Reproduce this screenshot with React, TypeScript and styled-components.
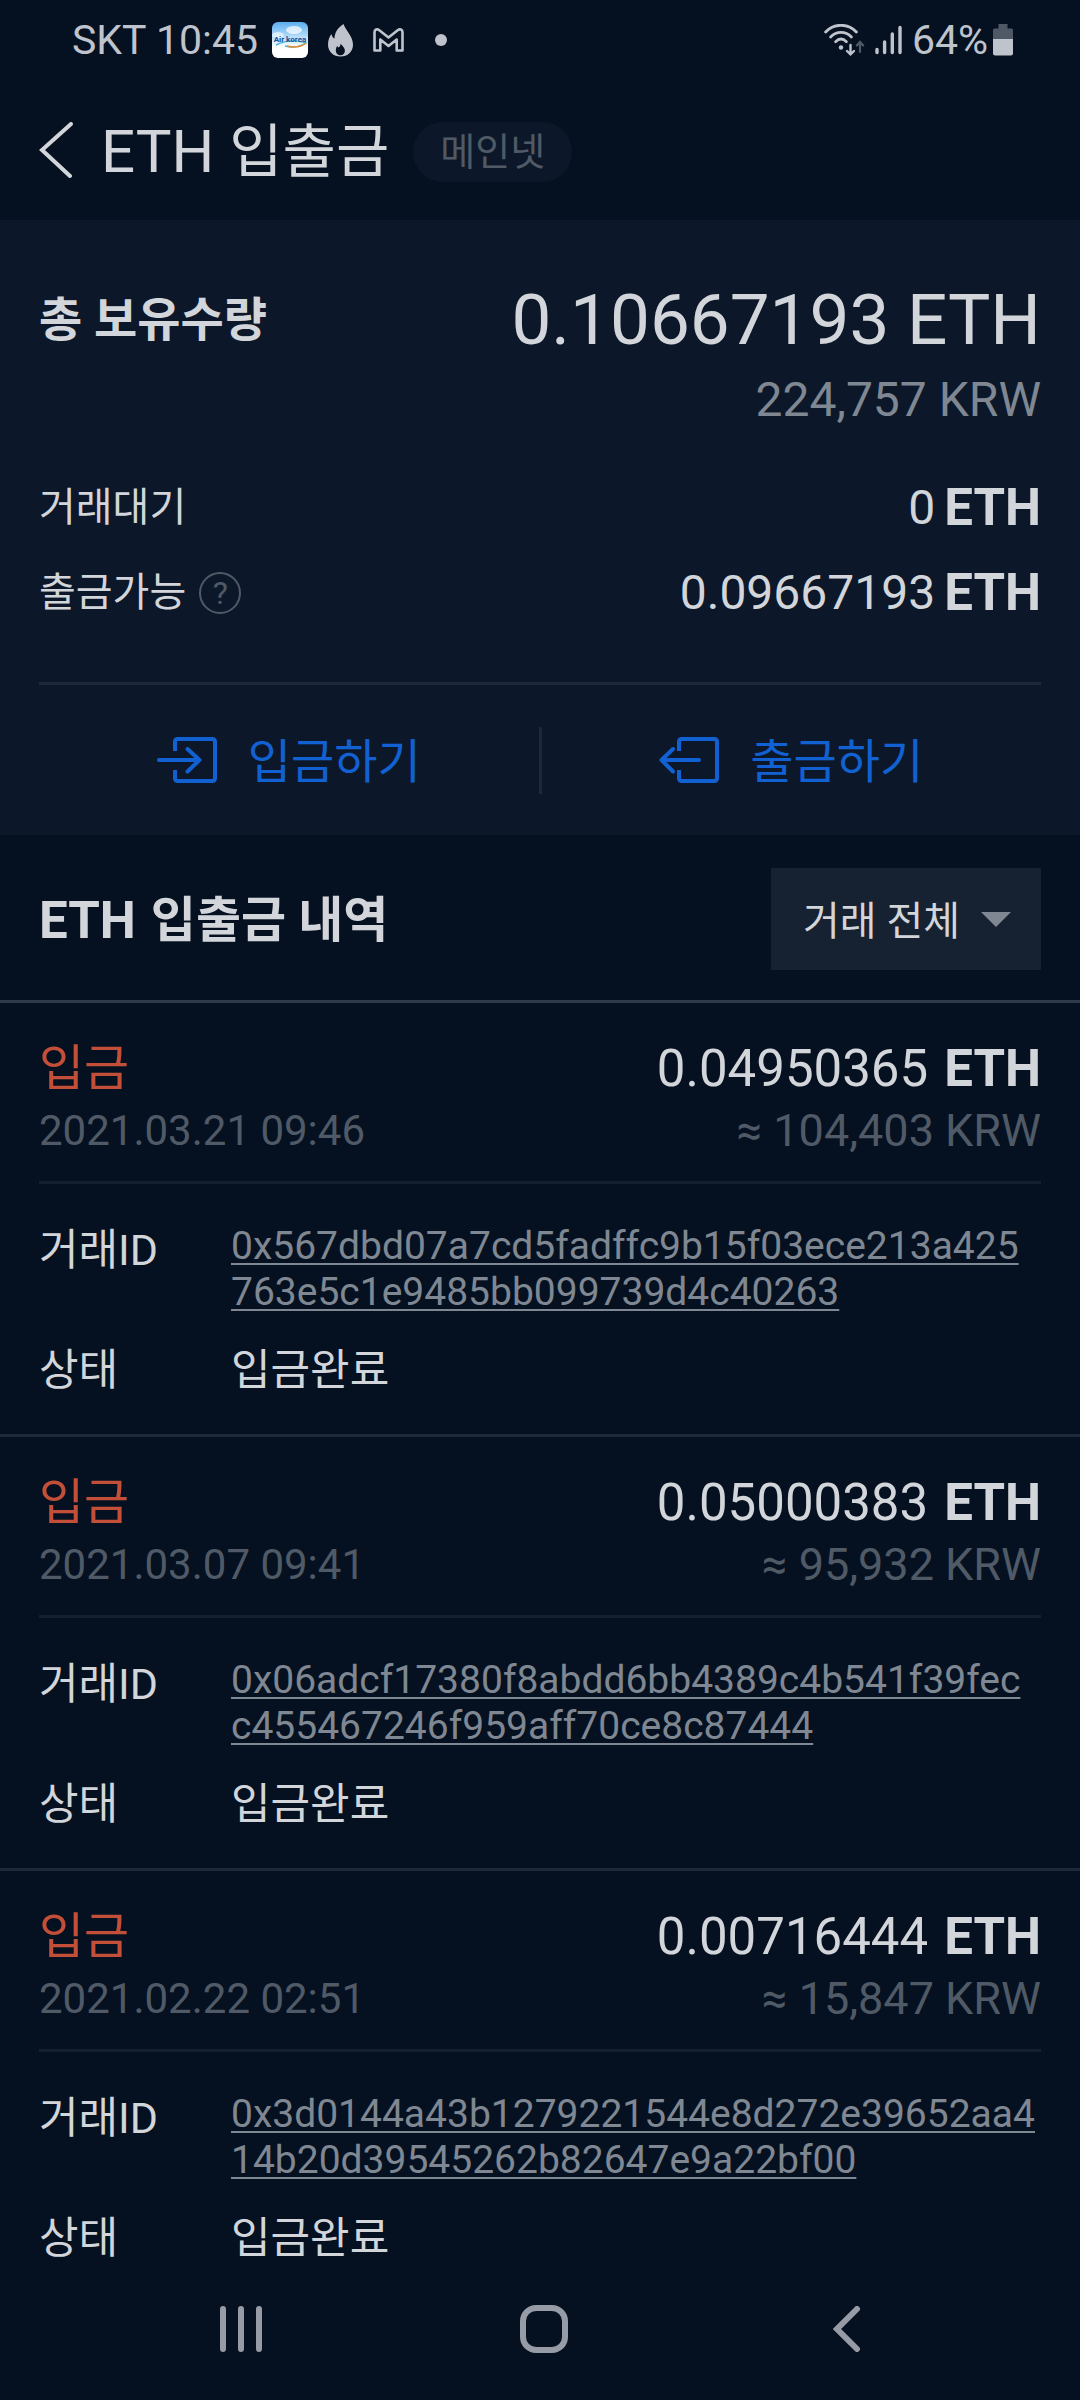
import React from "react";
import styled, { createGlobalStyle } from "styled-components";

const color = {
  page: "#051120",
  panel: "#0c1829",
  field: "#162231",
  text: "#d2d5d9",
  sub: "#7f8792",
  dim: "#505a67",
  status: "#bfc4cc",
  nav: "#969ba5",
  blue: "#1261d2",
  red: "#c44f38",
  lineSoft: "#14202e",
  line: "#1d2938",
  lineStrong: "#2f3b4a",
};

const GlobalStyle = createGlobalStyle`
  *, *::before, *::after { box-sizing: border-box; }
  body {
    margin: 0;
    background: ${color.page};
    color: ${color.text};
    font-family: Roboto, "Noto Sans CJK KR", sans-serif;
  }
  h1, h2, p, dl, dd, dt, ul { margin: 0; padding: 0; font-weight: 400; }
  button { margin: 0; padding: 0; border: 0; background: none; color: inherit; font: inherit; cursor: pointer; }
  svg { display: block; flex: none; }
`;

const Screen = styled.div`
  display: flex;
  flex-direction: column;
  height: 100vh;
`;

const StatusBar = styled.div`
  display: flex;
  flex: none;
  align-items: center;
  justify-content: space-between;
  height: 80px;
  padding: 0 67px 0 72px;
  font-size: 41px;
  line-height: 48px;
  color: ${color.status};
`;

const StatusGroup = styled.div<{ $gap: number }>`
  display: flex;
  align-items: center;
  gap: ${(p) => p.$gap}px;
`;

const Header = styled.header`
  display: flex;
  flex: none;
  align-items: center;
  height: 140px;
  padding: 4px 39px 0;
`;

const BackButton = styled.button`
  padding-right: 28px;
`;

const Title = styled.h1`
  font-size: 60px;
  line-height: 72px;
`;

const TitleKo = styled.span`
  font-size: 58px;
`;

const Badge = styled.span`
  margin-left: 24px;
  padding: 0 27px;
  border-radius: 30px;
  background: ${color.panel};
  color: ${color.dim};
  font-size: 38px;
  line-height: 60px;
`;

const Panel = styled.section`
  flex: none;
  padding: 58px 39px 0;
  background: ${color.panel};
`;

const Row = styled.div`
  display: flex;
  align-items: flex-start;
  justify-content: space-between;
`;

const TotalLabel = styled.h2`
  font-size: 47px;
  font-weight: 700;
  line-height: 84px;
`;

const TotalValue = styled.div`
  display: grid;
  gap: 10px;
  text-align: right;
`;

const TotalAmount = styled.p`
  font-size: 71px;
  line-height: 84px;
`;

const TotalFiat = styled.p`
  color: ${color.sub};
  font-size: 48px;
  line-height: 56px;
`;

const Balances = styled.div`
  display: grid;
  gap: 25px;
  padding: 50px 0 59px;
`;

const BalanceLabel = styled.div`
  display: flex;
  align-items: center;
  gap: 13px;
  font-size: 40px;
  line-height: 60px;
`;

const HelpButton = styled.button`
  width: 42px;
  height: 42px;
  border: 2px solid ${color.dim};
  border-radius: 50%;
  color: ${color.dim};
  font-size: 32px;
  line-height: 38px;
`;

const BalanceValue = styled.p`
  display: flex;
  gap: 9px;
  font-size: 48px;
  line-height: 60px;
`;

const Unit = styled.strong`
  font-size: 51px;
  font-weight: 700;
`;

const Actions = styled.div`
  display: flex;
  align-items: center;
  height: 153px;
  border-top: 3px solid ${color.line};
`;

const ActionButton = styled.button`
  display: flex;
  flex: 1;
  align-items: center;
  justify-content: center;
  gap: 31px;
  color: ${color.blue};
  font-size: 47px;
  line-height: 68px;
`;

const ActionLabel = styled.span`
  padding-top: 3px;
`;

const ActionDivider = styled.span`
  width: 3px;
  height: 67px;
  background: ${color.line};
`;

const HistoryHead = styled.div`
  display: flex;
  flex: none;
  align-items: center;
  justify-content: space-between;
  padding: 33px 39px 30px;
  border-bottom: 3px solid ${color.lineStrong};
`;

const HistoryTitle = styled.h2`
  display: flex;
  gap: 15px;
  padding-top: 4px;
  font-size: 49px;
  font-weight: 700;
  line-height: 60px;
`;

const FilterBox = styled.label`
  display: grid;
  align-items: center;
  background: ${color.field};
  & > * { grid-area: 1 / 1; }
  & > svg { justify-self: end; margin-right: 30px; pointer-events: none; }
`;

const FilterSelect = styled.select`
  width: 270px;
  height: 102px;
  padding: 4px 32px 0;
  border: 0;
  border-radius: 0;
  background: transparent;
  color: ${color.text};
  font-family: inherit;
  font-size: 40px;
  appearance: none;
`;

const List = styled.ul`
  flex: 1;
  min-height: 0;
  overflow: hidden;
  list-style: none;
`;

const Item = styled.li`
  padding: 36px 39px;
  border-bottom: 3px solid ${color.line};
`;

const ItemHead = styled.div`
  display: grid;
  gap: 8px;
  padding-bottom: 26px;
  border-bottom: 3px solid ${color.lineSoft};
`;

const Kind = styled.p`
  color: ${color.red};
  font-size: 49px;
  line-height: 60px;
`;

const Amount = styled.p`
  display: flex;
  gap: 16px;
  font-size: 51px;
  line-height: 60px;
`;

const Small = styled.p<{ $size: number }>`
  color: ${color.dim};
  font-size: ${(p) => p.$size}px;
  line-height: 48px;
`;

const Details = styled.dl`
  display: grid;
  grid-template-columns: 192px 1fr;
  row-gap: 28px;
  padding-top: 38px;
  font-size: 43px;
  line-height: 56px;
`;

const HashCell = styled.dd`
  height: 92px;
  padding: 1px 4px 0 0;
  font-size: 39px;
  line-height: 46px;
  word-break: break-all;
`;

const HashLabel = styled.dt`
  height: 92px;
`;

const HashLink = styled.a`
  color: ${color.sub};
  text-decoration: underline;
  text-decoration-thickness: 2px;
  text-underline-offset: 4px;
`;

const NavBar = styled.nav`
  display: flex;
  flex: none;
  align-items: center;
  height: 130px;
  padding: 0 82px 12px 90px;
  color: ${color.nav};
`;

const NavButton = styled.button`
  display: flex;
  flex: 1;
  justify-content: center;
`;

const AirKoreaIcon = () => (
  <svg width="36" height="36" viewBox="0 0 36 36" aria-hidden="true">
    <defs>
      <linearGradient id="sky" x1="0" y1="0" x2="0" y2="1">
        <stop offset="0" stopColor="#5aaef0" />
        <stop offset="0.35" stopColor="#a8d6f8" />
        <stop offset="0.7" stopColor="#ffffff" />
      </linearGradient>
    </defs>
    <rect width="36" height="36" rx="6" fill="url(#sky)" />
    <ellipse cx="22" cy="8" rx="8" ry="4" fill="#fff" opacity="0.7" />
    <ellipse cx="6" cy="13" rx="6" ry="3" fill="#fff" opacity="0.6" />
    <path d="M4 23 Q18 16 34 21 Q24 27 13 24" fill="none" stroke="#4db4d8" strokeWidth="1.4" />
    <path d="M15 24 Q27 27 34 21" fill="none" stroke="#e58a2c" strokeWidth="1.6" />
    <text x="18" y="20" textAnchor="middle" fontSize="8" fontWeight="700" fontFamily="Roboto, sans-serif" fill="#1b4f94">Air korea</text>
  </svg>
);

const FlameIcon = () => (
  <svg width="25" height="33" viewBox="0 0 25 33" fill="currentColor" aria-hidden="true">
    <path
      fillRule="evenodd"
      d="M15.500 0C17 5.500 25 12 25 20.500C25 28 19.500 32.500 12.500 32.500C5.500 32.500 0 28 0 20.500C0 16 1.500 12.500 3.500 10C4 12.500 5 14 6.500 14.500C6.500 8.500 10 3.500 15.500 0ZM12.500 19.500C12.800 22 11.500 23 10.300 23.600C9.700 23 9.400 22.400 9.300 21.800C8.300 23.300 7.800 25 7.800 26.500C7.800 29.600 9.900 31.300 12.400 31.300C15 31.300 16.900 29.500 16.900 26.800C16.900 23.600 14.300 22 12.500 19.500Z"
    />
  </svg>
);

const GmailIcon = () => (
  <svg width="31" height="24" viewBox="0 0 31 24" fill="none" stroke="currentColor" strokeWidth="2.6" strokeLinejoin="round" aria-hidden="true">
    <path d="M1.500 4.200C1.500 1.400 4.200 0.700 6 2L15.500 9.500L25 2C26.800 0.700 29.500 1.400 29.500 4.200V22.500H23.700V11.500L15.500 18L7.300 11.500V22.500H1.500Z" />
  </svg>
);

const WifiIcon = () => (
  <svg width="41" height="32" viewBox="0 0 41 32" fill="none" stroke="currentColor" strokeLinecap="round" aria-hidden="true">
    <g strokeWidth="2.8">
      <path d="M1.600 8C10 -1 24 -1 32.400 8" />
      <path d="M6.600 13C12.500 6.800 21.500 6.800 27.400 13" />
      <path d="M11.600 17.800C15 14.400 19 14.400 22.400 17.800" />
    </g>
    <circle cx="17" cy="23.500" r="2.200" fill="currentColor" stroke="none" />
    <path d="M26.500 21V30M23 27L26.500 30.300L30 27" strokeWidth="2.400" />
    <path d="M36 28V18.500M32.800 21.500L36 18L39.200 21.500" strokeWidth="2.200" opacity="0.4" />
  </svg>
);

const SignalIcon = () => (
  <svg width="27" height="30" viewBox="0 0 27 30" stroke="currentColor" strokeWidth="3.400" strokeLinecap="round" aria-hidden="true">
    <path d="M2 24.500V27.500M9.600 17V27.500M17.300 9V27.500M25 2.500V27.500" />
  </svg>
);

const BatteryIcon = () => (
  <svg width="20" height="32" viewBox="0 0 20 32" fill="currentColor" aria-hidden="true">
    <path d="M5.500 0H14.500V4.500H18.500Q20 4.500 20 6V15H0V6Q0 4.500 1.500 4.500H5.500Z" opacity="0.4" />
    <path d="M0 15H20V29.500Q20 31.500 18 31.500H2Q0 31.500 0 29.500Z" />
  </svg>
);

const DepositIcon = () => (
  <svg width="60" height="46" viewBox="0 0 60 46" fill="none" stroke="currentColor" strokeWidth="4" aria-hidden="true">
    <path d="M18 14V5Q18 2 21 2H55Q58 2 58 5V41Q58 44 55 44H21Q18 44 18 41V33" />
    <path d="M2 23H42M30.500 12L42.500 23L30.500 34.500" strokeLinecap="round" strokeLinejoin="round" />
  </svg>
);

const WithdrawIcon = () => (
  <svg width="60" height="46" viewBox="0 0 60 46" fill="none" stroke="currentColor" strokeWidth="4" aria-hidden="true">
    <path d="M20 14V5Q20 2 23 2H55Q58 2 58 5V41Q58 44 55 44H23Q20 44 20 41V33" />
    <path d="M40 23H3M14 12L2.500 23L14 34.500" strokeLinecap="round" strokeLinejoin="round" />
  </svg>
);

const transactions = [
  {
    amount: "0.04950365",
    date: "2021.03.21 09:46",
    fiat: "104,403",
    hash: "0x567dbd07a7cd5fadffc9b15f03ece213a425763e5c1e9485bb099739d4c40263",
  },
  {
    amount: "0.05000383",
    date: "2021.03.07 09:41",
    fiat: "95,932",
    hash: "0x06adcf17380f8abdd6bb4389c4b541f39fecc455467246f959aff70ce8c87444",
  },
  {
    amount: "0.00716444",
    date: "2021.02.22 02:51",
    fiat: "15,847",
    hash: "0x3d0144a43b1279221544e8d272e39652aa414b20d39545262b82647e9a22bf00",
  },
];

export default function App() {
  return (
    <>
      <GlobalStyle />
      <Screen>
        <StatusBar>
          <StatusGroup $gap={14}>
            <span>SKT 10:45</span>
            <StatusGroup $gap={20}>
              <AirKoreaIcon />
              <FlameIcon />
              <GmailIcon />
            </StatusGroup>
            <svg width="48" height="12" viewBox="0 0 48 12" fill="currentColor" aria-hidden="true">
              <circle cx="23" cy="6" r="6" />
            </svg>
          </StatusGroup>
          <StatusGroup $gap={10}>
            <WifiIcon />
            <SignalIcon />
            <StatusGroup $gap={5}>
              <span>64%</span>
              <BatteryIcon />
            </StatusGroup>
          </StatusGroup>
        </StatusBar>

        <Header>
          <BackButton aria-label="뒤로">
            <svg width="34" height="60" viewBox="0 0 34 60" fill="none" stroke={color.text} strokeWidth="4" strokeLinecap="round" aria-hidden="true">
              <path d="M32 2L3 28L31 54" />
            </svg>
          </BackButton>
          <Title>
            ETH <TitleKo>입출금</TitleKo>
          </Title>
          <Badge>메인넷</Badge>
        </Header>

        <Panel>
          <Row>
            <TotalLabel>총 보유수량</TotalLabel>
            <TotalValue>
              <TotalAmount>0.10667193 ETH</TotalAmount>
              <TotalFiat>224,757 KRW</TotalFiat>
            </TotalValue>
          </Row>
          <Balances>
            <Row>
              <BalanceLabel>거래대기</BalanceLabel>
              <BalanceValue>
                0<Unit>ETH</Unit>
              </BalanceValue>
            </Row>
            <Row>
              <BalanceLabel>
                출금가능
                <HelpButton>?</HelpButton>
              </BalanceLabel>
              <BalanceValue>
                0.09667193<Unit>ETH</Unit>
              </BalanceValue>
            </Row>
          </Balances>
          <Actions>
            <ActionButton>
              <DepositIcon />
              <ActionLabel>입금하기</ActionLabel>
            </ActionButton>
            <ActionDivider />
            <ActionButton>
              <WithdrawIcon />
              <ActionLabel>출금하기</ActionLabel>
            </ActionButton>
          </Actions>
        </Panel>

        <HistoryHead>
          <HistoryTitle>
            <Unit>ETH</Unit>
            <span>입출금 내역</span>
          </HistoryTitle>
          <FilterBox>
            <FilterSelect aria-label="거래 종류" defaultValue="all">
              <option value="all">거래 전체</option>
            </FilterSelect>
            <svg width="30" height="15" viewBox="0 0 30 15" fill={color.sub} aria-hidden="true">
              <path d="M0 0H30L15 15Z" />
            </svg>
          </FilterBox>
        </HistoryHead>

        <List>
          {transactions.map((tx) => (
            <Item key={tx.hash}>
              <ItemHead>
                <Row>
                  <Kind>입금</Kind>
                  <Amount>
                    {tx.amount}
                    <Unit>ETH</Unit>
                  </Amount>
                </Row>
                <Row>
                  <Small $size={42}>{tx.date}</Small>
                  <Small $size={45}>≈ {tx.fiat} KRW</Small>
                </Row>
              </ItemHead>
              <Details>
                <HashLabel>거래ID</HashLabel>
                <HashCell>
                  <HashLink href="#">{tx.hash}</HashLink>
                </HashCell>
                <dt>상태</dt>
                <dd>입금완료</dd>
              </Details>
            </Item>
          ))}
        </List>

        <NavBar>
          <NavButton aria-label="최근 앱">
            <svg width="44" height="46" viewBox="0 0 44 46" stroke="currentColor" strokeWidth="6" strokeLinecap="round" aria-hidden="true">
              <path d="M4 3V43M22 3V43M40 3V43" />
            </svg>
          </NavButton>
          <NavButton aria-label="홈">
            <svg width="48" height="48" viewBox="0 0 48 48" fill="none" stroke="currentColor" strokeWidth="6" aria-hidden="true">
              <rect x="3" y="3" width="42" height="42" rx="13" />
            </svg>
          </NavButton>
          <NavButton aria-label="이전">
            <svg width="28" height="46" viewBox="0 0 28 46" fill="none" stroke="currentColor" strokeWidth="6" strokeLinecap="round" aria-hidden="true">
              <path d="M24 3L4 23L24 43" />
            </svg>
          </NavButton>
        </NavBar>
      </Screen>
    </>
  );
}
